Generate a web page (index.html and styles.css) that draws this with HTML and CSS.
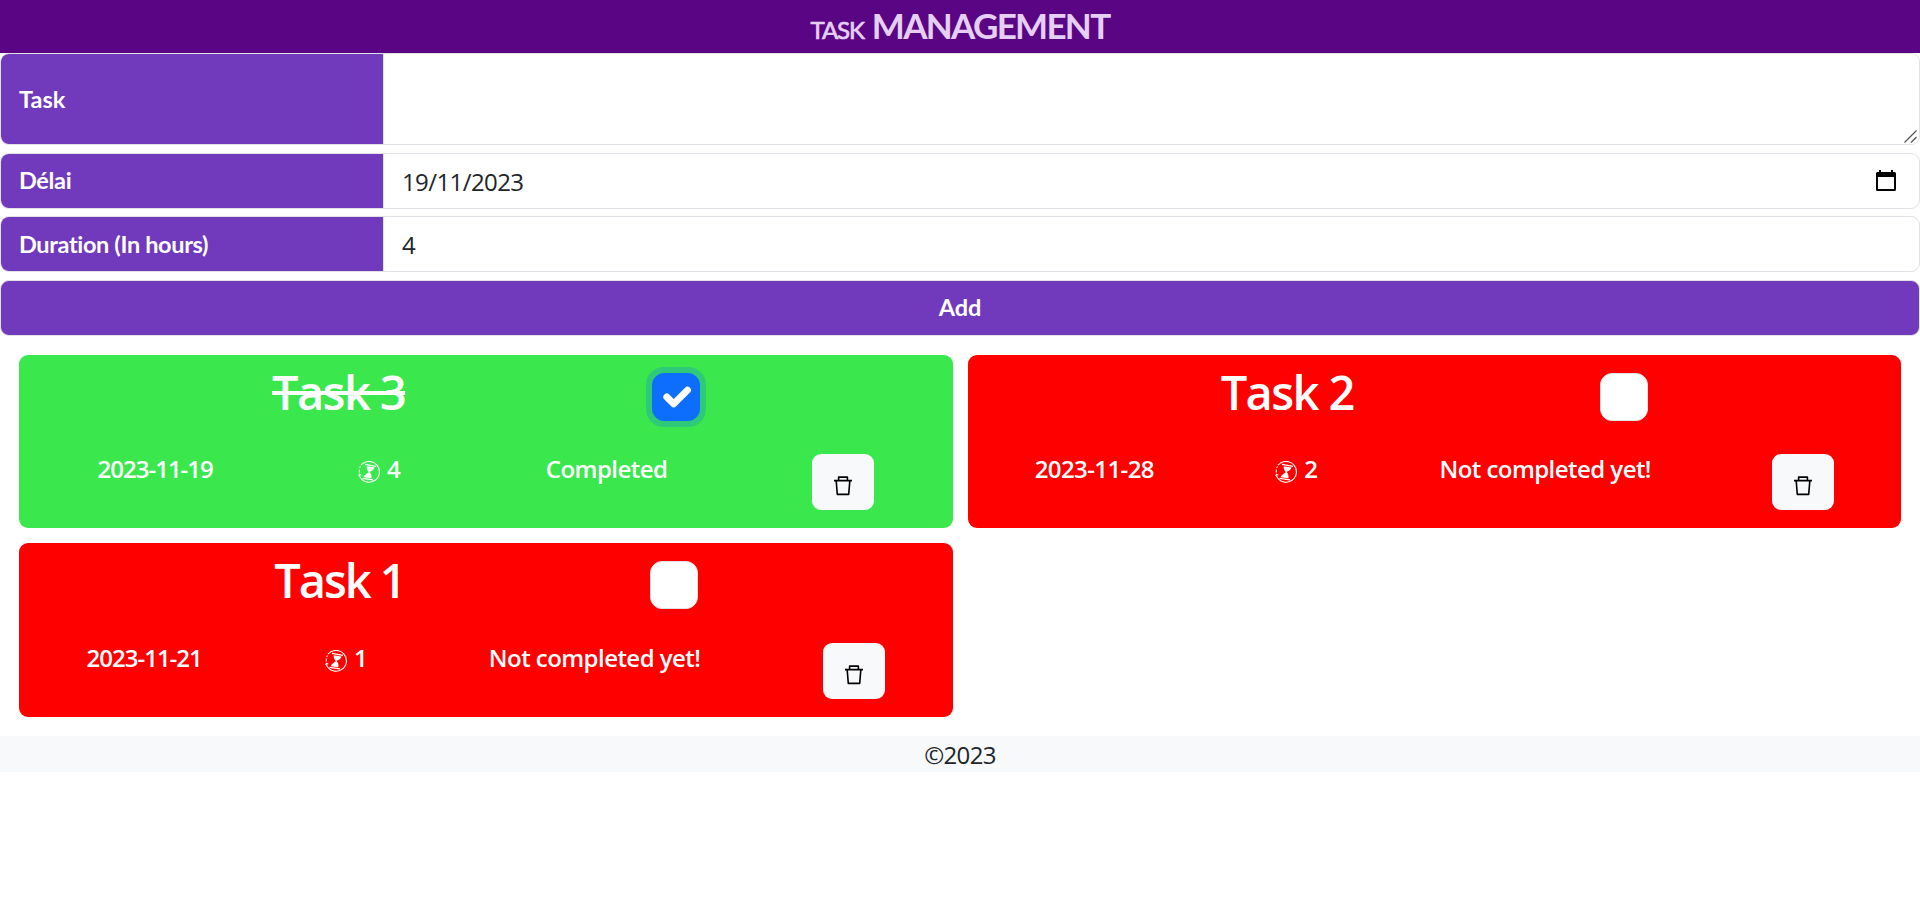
FILE: index.html
```html
<!DOCTYPE html>
<html lang="en">
<head>
<meta charset="utf-8">
<title>Task management</title>
<link rel="stylesheet" href="styles.css">
</head>
<body>
<svg class="sprite" aria-hidden="true">
  <symbol id="trash" viewBox="0 0 18 20">
    <path d="M0 4.600h18M4.600 4.200V1.100h8.800v3.100M2.200 5l1.100 13.400h11.400L15.800 5" fill="none" stroke="#000" stroke-width="1.600" stroke-linejoin="round"/>
  </symbol>
  <symbol id="hourglass" viewBox="0 0 22 22">
    <path d="M3 4.200A10.400 10.400 0 1 1 1.500 15" fill="none" stroke="#fff" stroke-width="1.100"/>
    <path d="M1.300 11.500V8.500M1.700 7l.7-1.600" stroke="#fff"/>
    <path d="M0 15.200l1.200-2.700 2.600 1.500z" fill="#fff"/>
    <path d="M7 3.300l11 2M4.500 17.400l10.500 1.500" stroke="#fff" stroke-width="1.200"/>
    <path d="M8.700 5.200l7.800 1.300c-.5 2.500-2.600 3.100-4.800 4.300 1.200 2 2.300 4 1.700 6.500l-7.600-1c.6-2.600 3-3.400 5-5C9.500 9.500 8.400 7.500 8.700 5.200z" fill="#fff"/>
  </symbol>
</svg>
<header class="banner"><h1><small>TASK</small> <span>MANAGEMENT</span></h1></header>
<form class="form">
  <div class="group tall"><label for="task">Task</label><textarea id="task"></textarea>
    <svg class="grip" viewBox="0 0 13 13"><path d="M.5 12.500l12-12M7 12.500l5.500-5.500" stroke="#555" stroke-width="1.300"/></svg>
  </div>
  <div class="group"><label><span class="tight">Délai</span></label><div class="value"><span>19/11/2023</span>
    <svg class="calendar" viewBox="0 0 20 22"><path d="M3 0h2v2h10V0h2v2h1.500Q20 2 20 3.500v16q0 1.500-1.500 1.500h-17Q0 21 0 19.500v-16Q0 2 1.500 2H3zM2 7v12h16V7z" fill-rule="evenodd"/></svg>
  </div></div>
  <div class="group"><label><span class="tight">Duration (In hours)</span></label><div class="value"><span>4</span></div></div>
  <button class="add" type="button">Add</button>
</form>
<main class="tasks">
  <article class="card done">
    <div class="head"><h2>Task 3</h2><span class="check checked"><svg viewBox="0 0 20 20"><path fill="none" stroke="#fff" stroke-linecap="round" stroke-linejoin="round" stroke-width="3" d="m6 10 3 3 6-6"/></svg></span></div>
    <div class="info"><b class="date">2023-11-19</b><b class="hours"><svg><use href="#hourglass"/></svg>4</b><b class="state">Completed</b><button class="trash" type="button"><svg><use href="#trash"/></svg></button></div>
  </article>
  <article class="card">
    <div class="head"><h2>Task 2</h2><span class="check"></span></div>
    <div class="info"><b class="date wide">2023-11-28</b><b class="hours"><svg><use href="#hourglass"/></svg>2</b><b class="state">Not completed yet!</b><button class="trash" type="button"><svg><use href="#trash"/></svg></button></div>
  </article>
  <article class="card last">
    <div class="head"><h2 class="narrow">Task 1</h2><span class="check"></span></div>
    <div class="info"><b class="date">2023-11-21</b><b class="hours one"><svg><use href="#hourglass"/></svg>1</b><b class="state">Not completed yet!</b><button class="trash" type="button"><svg><use href="#trash"/></svg></button></div>
  </article>
</main>
<footer class="footer">©2023</footer>
</body>
</html>
```
FILE: styles.css
```css
* { box-sizing: border-box; }
body { margin: 0; background: #fff; color: #212529; font: 24px/36px "Open Sans", sans-serif; }
h1, h2 { margin: 0; }
.sprite { position: absolute; width: 0; height: 0; }
.banner { height: 53px; background: #5a0584; text-align: center; color: #e5cff5; }
.banner h1 { font: 700 35px/50px Lato, sans-serif; letter-spacing: -1.7px; display: flex; justify-content: center; align-items: baseline; gap: 8px; }
.banner small { font-size: 24px; font-weight: 400; letter-spacing: -1.1px; -webkit-text-stroke: .7px; }
.form { display: grid; grid-template-rows: 92px 56px 56px 56px; row-gap: 7.6px; }
.group { position: relative; display: flex; border: 1px solid #dee2e6; border-radius: 9px; overflow: hidden; }
.group label { width: 382px; flex: none; padding: 0 0 1px 18px; display: flex; align-items: center; background: #7139bc; color: #fff; font: 700 23.5px/36px Lato, sans-serif; }
.tight { letter-spacing: -.35px; }
.group textarea { flex: 1; border: 0; border-left: 1px solid #dee2e6; outline: 0; resize: none; padding: 9px 18px; background: #fff; }
.grip { position: absolute; right: 2px; bottom: 1px; width: 13px; height: 13px; }
.value { flex: 1; display: flex; align-items: center; justify-content: space-between; border-left: 1px solid #dee2e6; padding: 2px 23px 0 18px; letter-spacing: -.6px; }
.calendar { width: 20px; height: 22px; margin-top: -2px; }
.add { padding: 0 0 1px; border: 1px solid #dee2e6; border-radius: 9px; background: #7139bc; color: #fff; font: 700 23.5px/36px Lato, sans-serif; }
.tasks { display: grid; grid-template-columns: 934px 933px; gap: 15px; padding: 19px; }
.card { height: 173px; border-radius: 9px; background: #f00; color: #fff; padding: 18px 6px; }
.done { background: #3ae84e; }
.last { height: 174px; }
.head { height: 48px; display: flex; justify-content: space-evenly; }
.head h2 { font-size: 47px; font-weight: 600; line-height: 38px; letter-spacing: -1.6px; white-space: nowrap; width: 133px; }
.head .narrow { width: 126px; letter-spacing: -2.1px; }
.done h2 { text-decoration: line-through; }
.check { width: 48px; height: 48px; background: #fff; border: 1px solid #dee2e6; border-radius: 12px; }
.checked { background: #0d6efd; border-color: #0d6efd; box-shadow: 0 0 0 6px rgba(13,110,253,.25); }
.checked svg { display: block; width: 46px; height: 46px; }
.info { margin-top: 33px; height: 56px; display: flex; justify-content: space-around; align-items: flex-start; }
.last .info { margin-top: 34px; }
.info b { font-weight: 600; line-height: 30px; white-space: nowrap; }
.info .date { letter-spacing: -1px; }
.info .wide { letter-spacing: -.6px; }
.info .state { letter-spacing: -.55px; }
.hours { display: flex; gap: 7px; }
.one { letter-spacing: -2px; }
.hours svg { width: 22px; height: 22px; margin-top: 7px; }
.trash { width: 62px; height: 56px; padding: 0; border: 0; border-radius: 9px; background: #f8f9fb; }
.trash svg { display: block; width: 18px; height: 20px; margin: 8px auto 0; }
.footer { height: 36px; padding-top: 1px; background: #f8f9fb; text-align: center; letter-spacing: -.7px; }
```
